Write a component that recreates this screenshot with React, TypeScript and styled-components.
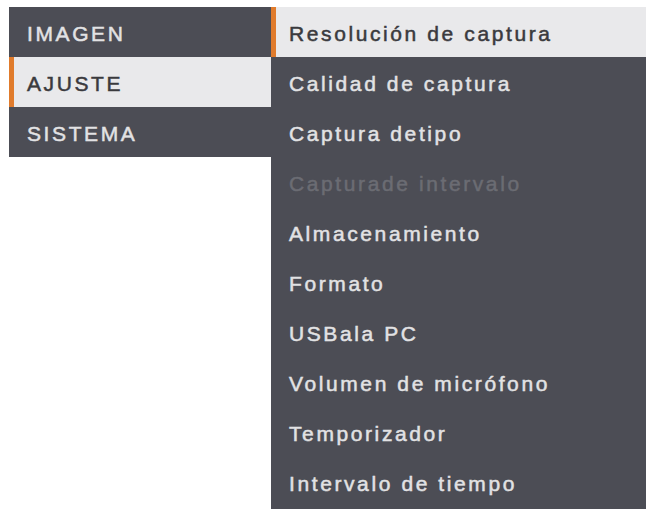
import React from "react";
import styled, { createGlobalStyle } from "styled-components";

const Global = createGlobalStyle`
  html, body { margin: 0; padding: 0; background: #ffffff; }
  body { font-family: "Liberation Sans", Arial, sans-serif; }
`;

const Screen = styled.div`
  display: flex;
  align-items: flex-start;
  padding: 7px 0 0 9px;
`;

const Panel = styled.div<{ $width: number }>`
  width: ${(p) => p.$width}px;
  background: #4c4d55;
  display: flex;
  flex-direction: column;
`;

const SubPanel = styled(Panel)`
  padding-bottom: 2px;
`;

const Row = styled.div<{ $active?: boolean; $disabled?: boolean; $pad: number }>`
  height: 50px;
  box-sizing: border-box;
  display: flex;
  align-items: center;
  padding-top: 3px;
  font-size: 21px;
  font-weight: normal;
  letter-spacing: 2.6px;
  -webkit-text-stroke: 0.5px currentColor;
  white-space: nowrap;
  background: ${(p) => (p.$active ? "#e9e9eb" : "transparent")};
  color: ${(p) => (p.$active ? "#3a3a3e" : p.$disabled ? "#6b6c73" : "#e2e2e4")};
  border-left: ${(p) => (p.$active ? "5px solid #e07b2c" : "0")};
  padding-left: ${(p) => (p.$active ? p.$pad - 5 : p.$pad)}px;
`;

const mainItems = ["IMAGEN", "AJUSTE", "SISTEMA"];
const subItems = [
  "Resolución de captura",
  "Calidad de captura",
  "Captura detipo",
  "Capturade intervalo",
  "Almacenamiento",
  "Formato",
  "USBala PC",
  "Volumen de micrófono",
  "Temporizador",
  "Intervalo de tiempo",
];

export default function App() {
  return (
    <>
      <Global />
      <Screen>
        <Panel $width={262}>
          {mainItems.map((t) => (
            <Row key={t} $pad={18} $active={t === "AJUSTE"}>
              {t}
            </Row>
          ))}
        </Panel>
        <SubPanel $width={375}>
          {subItems.map((t, i) => (
            <Row key={t} $pad={18} $active={i === 0} $disabled={i === 3}>
              {t}
            </Row>
          ))}
        </SubPanel>
      </Screen>
    </>
  );
}
